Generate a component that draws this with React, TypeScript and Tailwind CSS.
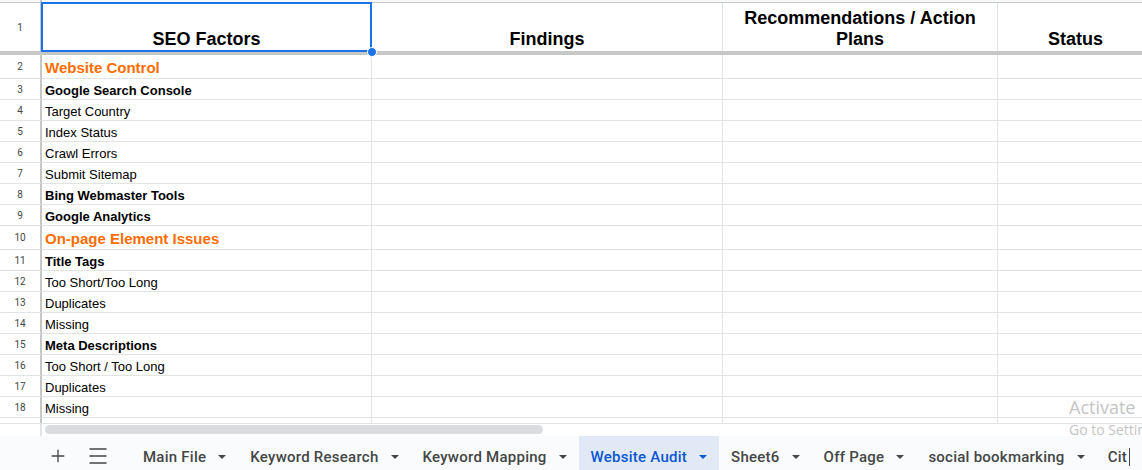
import { Plus, Menu } from "lucide-react";

type Kind = "orange" | "bold" | "plain";

const ROWS: { n: number; text: string; kind: Kind }[] = [
  { n: 2, text: "Website Control", kind: "orange" },
  { n: 3, text: "Google Search Console", kind: "bold" },
  { n: 4, text: "Target Country", kind: "plain" },
  { n: 5, text: "Index Status", kind: "plain" },
  { n: 6, text: "Crawl Errors", kind: "plain" },
  { n: 7, text: "Submit Sitemap", kind: "plain" },
  { n: 8, text: "Bing Webmaster Tools", kind: "bold" },
  { n: 9, text: "Google Analytics", kind: "bold" },
  { n: 10, text: "On-page Element Issues", kind: "orange" },
  { n: 11, text: "Title Tags", kind: "bold" },
  { n: 12, text: "Too Short/Too Long", kind: "plain" },
  { n: 13, text: "Duplicates", kind: "plain" },
  { n: 14, text: "Missing", kind: "plain" },
  { n: 15, text: "Meta Descriptions", kind: "bold" },
  { n: 16, text: "Too Short / Too Long", kind: "plain" },
  { n: 17, text: "Duplicates", kind: "plain" },
  { n: 18, text: "Missing", kind: "plain" },
];

const TABS = [
  "Main File",
  "Keyword Research",
  "Keyword Mapping",
  "Website Audit",
  "Sheet6",
  "Off Page",
  "social bookmarking",
];

const COLS = "grid grid-cols-[42px_330px_351px_275px_156px]";

function Caret({ active }: { active?: boolean }) {
  return (
    <svg width="8" height="4" viewBox="0 0 8 4">
      <path d="M0 0h8L4 4z" fill={active ? "#0b57d0" : "#444746"} />
    </svg>
  );
}

function Row({ n, text, kind }: { n: number; text: string; kind: Kind }) {
  const tall = kind === "orange";
  const textCls =
    kind === "orange"
      ? "text-[15px] font-bold text-[#ff6d01] leading-[18px] pb-[1px]"
      : kind === "bold"
        ? "text-[13px] font-bold text-black leading-[16px]"
        : "text-[13px] text-black leading-[16px]";
  return (
    <div className={`${COLS} ${tall ? "h-[24px]" : "h-[21px]"}`}>
      <div className="flex items-center justify-center border-r-2 border-b border-r-[#c4c7c5] border-b-[#e2e3e3] text-[10px] text-[#444746] font-['Roboto',sans-serif]">
        {n}
      </div>
      <div className={`flex items-end pl-[3px] border-r border-b border-[#e2e3e3] whitespace-nowrap ${textCls}`}>
        {text}
      </div>
      <div className="border-r border-b border-[#e2e3e3]" />
      <div className="border-r border-b border-[#e2e3e3]" />
      <div className="border-r border-b border-[#e2e3e3]" />
    </div>
  );
}

export default function App() {
  return (
    <div className="relative w-[1142px] h-[470px] overflow-hidden bg-white flex flex-col font-['Liberation_Sans',Arial,sans-serif]">
      <div className="h-[423px] overflow-hidden">
        {/* column header remnant */}
        <div className={`${COLS} h-[3px]`}>
          <div className="bg-[#f8f9fa] border-r-2 border-b border-[#c4c7c5]" />
          <div className="bg-[#f8f9fa] border-r border-b border-[#c4c7c5] col-span-4" />
        </div>

        {/* header row */}
        <div className={`${COLS} h-[48px] text-[18px] font-bold text-black leading-[21px]`}>
          <div className="flex items-center justify-center border-r-2 border-[#c4c7c5] text-[10px] font-normal text-[#444746] font-['Roboto',sans-serif]">
            1
          </div>
          <div className="flex items-end justify-center text-center pb-[1px] border-r border-[#e2e3e3]">
            SEO Factors
          </div>
          <div className="flex items-end justify-center text-center pb-[1px] border-r border-[#e2e3e3]">
            Findings
          </div>
          <div className="flex items-end justify-center text-center pb-[1px] px-[10px] border-r border-[#e2e3e3]">
            Recommendations / Action Plans
          </div>
          <div className="flex items-end justify-center text-center pb-[1px] border-r border-[#e2e3e3]">
            Status
          </div>
        </div>

        {/* frozen row divider */}
        <div className="h-[4px] bg-[#c7c7c7]" />

        {ROWS.map((r) => (
          <Row key={r.n} {...r} />
        ))}

        <div className={`${COLS} h-[21px]`}>
          <div className="border-r-2 border-[#c4c7c5]" />
          <div className="border-r border-[#e2e3e3]" />
          <div className="border-r border-[#e2e3e3]" />
          <div className="border-r border-[#e2e3e3]" />
          <div className="border-r border-[#e2e3e3]" />
        </div>
      </div>

      {/* horizontal scrollbar */}
      <div className="h-[13px] flex border-t border-[#e2e3e3]">
        <div className="w-[42px] border-r-2 border-[#e2e3e3]" />
        <div className="pl-[3px] pt-[1px]">
          <div className="w-[498px] h-[9px] rounded-full bg-[#dadce0]" />
        </div>
      </div>

      {/* sheet tabs */}
      <div className="h-[34px] flex items-stretch bg-[#f9fbfd] font-['Roboto',sans-serif] text-[15px] tracking-[0.25px] font-medium text-[#444746] whitespace-nowrap">
        <div className="ml-[48px] flex items-center pt-[6px]">
          <Plus size={20} strokeWidth={1.6} color="#444746" />
        </div>
        <div className="ml-[18px] flex items-center pt-[6px]">
          <Menu size={24} strokeWidth={1.5} color="#444746" />
        </div>
        <div className="ml-[21px] flex items-stretch">
          {TABS.map((t) => {
            const active = t === "Website Audit";
            return (
              <div
                key={t}
                className={`flex items-center gap-3 px-3 pt-[8px] ${active ? "bg-[#e1e9f7] text-[#0b57d0]" : ""}`}
              >
                <span>{t}</span>
                <Caret active={active} />
              </div>
            );
          })}
          <div className="flex items-center px-[11px] pt-[8px]">
            <span>Cit</span>
            <span className="ml-[2px] w-px h-[18px] bg-[#444746]" />
          </div>
        </div>
      </div>

      {/* selection on A1 */}
      <div className="absolute left-[41px] top-[2px] w-[331px] h-[50px] border-2 border-[#1a73e8]" />
      <div className="absolute left-[367px] top-[47px] w-[10px] h-[10px] rounded-full bg-[#1a73e8] border border-white" />

      {/* Windows watermark */}
      <div className="absolute left-[1069px] top-[398px] font-['Open_Sans',sans-serif] text-[#c4c4c4] leading-none whitespace-nowrap">
        <div className="text-[18px]">Activate</div>
        <div className="text-[14px] mt-[7px]">Go to Settings</div>
      </div>
    </div>
  );
}
